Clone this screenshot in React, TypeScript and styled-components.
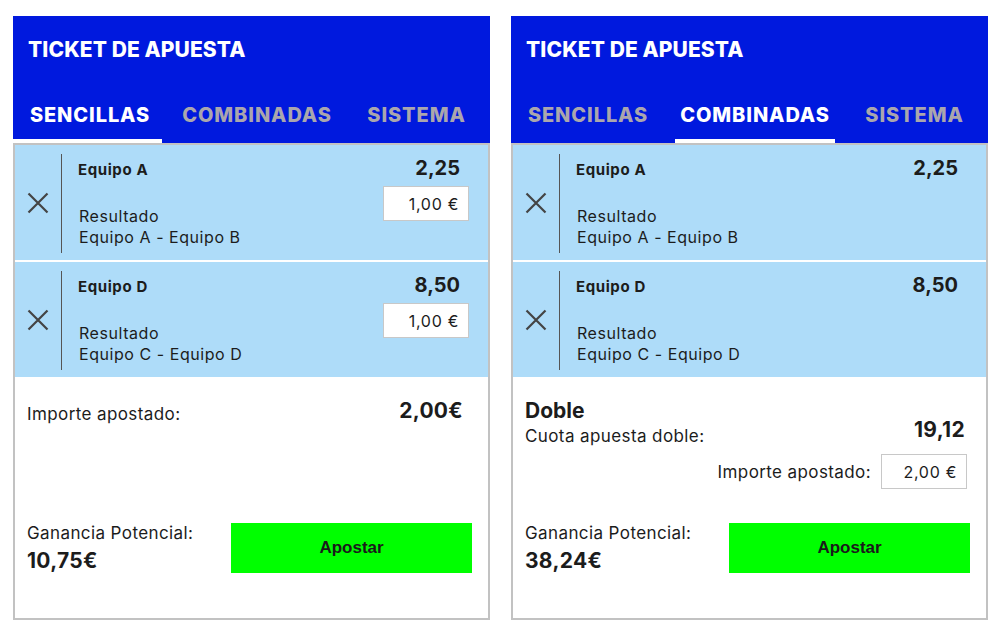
import React from 'react'
import styled, { createGlobalStyle } from 'styled-components'

const GlobalStyle = createGlobalStyle`
  body {
    margin: 0;
    background: #ffffff;
    font-family: Inter, 'Noto Sans', sans-serif;
    color: #1c1c1c;
  }
`

const Page = styled.div`
  display: flex;
  gap: 21px;
  padding: 16px 0 0 13px;
`

const Panel = styled.section`
  width: 477px;
  display: flex;
  flex-direction: column;
`

const Header = styled.header`
  background: #0019de;
  height: 127px;
  box-sizing: border-box;
  padding-top: 21px;
  display: flex;
  flex-direction: column;
  justify-content: space-between;
`

const Title = styled.h1`
  margin: 0;
  padding-left: 15px;
  font-size: 21px;
  line-height: 25px;
  font-weight: 800;
  letter-spacing: 0.1px;
  color: #ffffff;
`

const Tabs = styled.nav`
  display: flex;
`

const Tab = styled.div<{ $active?: boolean; $width: number; $offset: number; $pad: number }>`
  width: ${({ $width }) => $width}px;
  margin-left: ${({ $offset }) => $offset}px;
  padding-left: ${({ $pad }) => $pad}px;
  box-sizing: border-box;
  padding-bottom: 12px;
  border-bottom: 4px solid ${({ $active }) => ($active ? '#ffffff' : 'transparent')};
  text-align: center;
  font-size: 20px;
  line-height: 24px;
  font-weight: 800;
  letter-spacing: 0.9px;
  color: ${({ $active }) => ($active ? '#ffffff' : '#aaa6ad')};
`

const Body = styled.div`
  height: 477px;
  box-sizing: border-box;
  border: 2px solid #c2c2c2;
  display: flex;
  flex-direction: column;
`

const Selections = styled.div`
  display: flex;
  flex-direction: column;
  gap: 2px;
  background: #ffffff;
`

const Row = styled.div`
  height: 115px;
  background: #aedcf9;
  display: flex;
`

const Remove = styled.button`
  width: 46px;
  padding: 0;
  border: 0;
  background: none;
  display: flex;
  align-items: center;
  justify-content: center;
  cursor: pointer;
`

const Divider = styled.div`
  width: 1px;
  margin: 9px 0 7px;
  background: #555555;
`

const Info = styled.div`
  flex: 1;
  padding: 15px 0 0 16px;
`

const Team = styled.div`
  font-size: 15px;
  line-height: 20px;
  font-weight: 700;
  letter-spacing: 0.6px;
`

const Market = styled.div`
  margin-top: 26px;
  padding-left: 1px;
  font-size: 16px;
  line-height: 21px;
  letter-spacing: 0.55px;
`

const Side = styled.div`
  width: 86px;
  margin-right: 19px;
  padding-top: 11px;
  display: flex;
  flex-direction: column;
  align-items: flex-end;
  gap: 6px;
`

const Odds = styled.div`
  padding-right: 9px;
  font-size: 20px;
  line-height: 24px;
  font-weight: 700;
`

const Stake = styled.div`
  width: 86px;
  height: 35px;
  box-sizing: border-box;
  padding-right: 9px;
  background: #ffffff;
  border: 1px solid #c8c8c8;
  display: flex;
  align-items: center;
  justify-content: flex-end;
  font-size: 16px;
  letter-spacing: 0.7px;
`

const Summary = styled.div`
  flex: 1;
  box-sizing: border-box;
  padding: 21px 16px 44px 12px;
  display: flex;
  flex-direction: column;
  justify-content: space-between;
`

const Line = styled.div`
  display: flex;
  align-items: flex-start;
  justify-content: space-between;
`

const Label = styled.div<{ $drop?: number }>`
  padding-top: ${({ $drop }) => $drop ?? 0}px;
  font-size: 17px;
  line-height: 22px;
  letter-spacing: 0.4px;
`

const Amount = styled.div<{ $inset?: number; $lift?: number }>`
  padding-right: ${({ $inset }) => $inset ?? 0}px;
  margin-top: ${({ $lift }) => -($lift ?? 0)}px;
  font-size: 21px;
  line-height: 26px;
  font-weight: 700;
  letter-spacing: 0.3px;
`

const BetName = styled.div`
  font-size: 21px;
  line-height: 26px;
  font-weight: 700;
`

const StakeLine = styled.div`
  margin-top: 7px;
  padding-right: 3px;
  display: flex;
  align-items: center;
  justify-content: flex-end;
  gap: 10px;
`

const Footer = styled.div`
  display: flex;
  align-items: center;
  justify-content: space-between;
`

const Winnings = styled.div`
  display: flex;
  flex-direction: column;
  gap: 4px;
`

const BetButton = styled.button`
  width: 241px;
  height: 50px;
  border: 0;
  background: #00ff00;
  font-family: 'Liberation Sans', Arial, sans-serif;
  font-size: 17px;
  font-weight: 700;
  color: #1a1a1a;
  cursor: pointer;
`

const CloseIcon = () => (
  <svg width="22" height="22" viewBox="0 0 22 22">
    <path d="M1.5 1.5 L20.5 20.5 M20.5 1.5 L1.5 20.5" stroke="#444" strokeWidth="2.2" fill="none" />
  </svg>
)

const selections = [
  { team: 'Equipo A', odds: '2,25', match: 'Equipo A - Equipo B' },
  { team: 'Equipo D', odds: '8,50', match: 'Equipo C - Equipo D' },
]

const tabs = [
  { name: 'SENCILLAS', width: 149, offset: 0, pad: 5 },
  { name: 'COMBINADAS', width: 160, offset: 15, pad: 0 },
  { name: 'SISTEMA', width: 147, offset: 6, pad: 0 },
]

const Ticket = ({ mode }: { mode: 'single' | 'combo' }) => (
  <Panel>
    <Header>
      <Title>TICKET DE APUESTA</Title>
      <Tabs>
        {tabs.map((tab, i) => (
          <Tab
            key={tab.name}
            $width={tab.width}
            $offset={tab.offset}
            $pad={tab.pad}
            $active={(mode === 'single' ? 0 : 1) === i}
          >
            {tab.name}
          </Tab>
        ))}
      </Tabs>
    </Header>
    <Body>
      <Selections>
        {selections.map((s) => (
          <Row key={s.team}>
            <Remove aria-label="Quitar">
              <CloseIcon />
            </Remove>
            <Divider />
            <Info>
              <Team>{s.team}</Team>
              <Market>
                Resultado
                <br />
                {s.match}
              </Market>
            </Info>
            <Side>
              <Odds>{s.odds}</Odds>
              {mode === 'single' && <Stake>1,00 €</Stake>}
            </Side>
          </Row>
        ))}
      </Selections>
      <Summary>
        {mode === 'single' ? (
          <Line>
            <Label $drop={5}>Importe apostado:</Label>
            <Amount $inset={9}>2,00€</Amount>
          </Line>
        ) : (
          <div>
            <BetName>Doble</BetName>
            <Line>
              <Label $drop={1}>Cuota apuesta doble:</Label>
              <Amount $inset={5} $lift={7}>
                19,12
              </Amount>
            </Line>
            <StakeLine>
              <Label>Importe apostado:</Label>
              <Stake>2,00 €</Stake>
            </StakeLine>
          </div>
        )}
        <Footer>
          <Winnings>
            <Label>Ganancia Potencial:</Label>
            <Amount>{mode === 'single' ? '10,75€' : '38,24€'}</Amount>
          </Winnings>
          <BetButton>Apostar</BetButton>
        </Footer>
      </Summary>
    </Body>
  </Panel>
)

const App = () => (
  <>
    <GlobalStyle />
    <Page>
      <Ticket mode="single" />
      <Ticket mode="combo" />
    </Page>
  </>
)

export default App
